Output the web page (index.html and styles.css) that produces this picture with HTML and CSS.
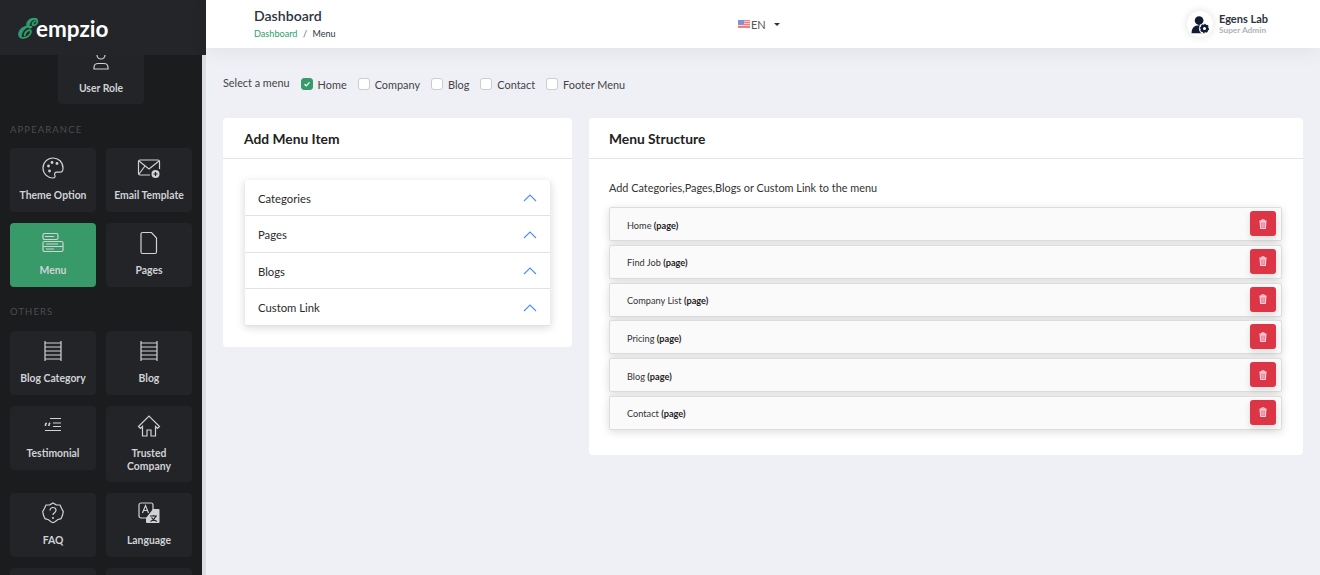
FILE: index.html
```html
<!DOCTYPE html>
<html lang="en">
<head>
<meta charset="utf-8">
<title>Menu - Dashboard</title>
<link rel="stylesheet" href="styles.css">
</head>
<body>
<div class="sidebar">
  <div class="logo"><span class="logo-mark">&#x2130;</span><span class="logo-word">empzio</span></div>
  <div class="side-scroll">
    <div class="side-inner">
      <div class="tile-row tile-row-center">
        <a class="tile">
          <svg class="ico" viewBox="0 0 24 24"><circle cx="12" cy="7" r="4"/><path d="M5 21v-1.500c0-2.500 2-4 4-4h6c2 0 4 1.500 4 4V21z"/></svg>
          <span>User Role</span>
        </a>
      </div>
      <div class="side-label label-appearance">APPEARANCE</div>
      <div class="tile-row">
        <a class="tile">
          <svg class="ico" viewBox="0 0 24 24"><path d="M12 2a10 10 0 1 0 0 20c2 0 2.500-1.500 1.800-2.800-.8-1.500.2-3 1.900-3H19c1.800 0 3-1.500 3-4C22 6 17.500 2 12 2z"/><circle cx="7.500" cy="10" r="1.400" class="fill"/><circle cx="11" cy="6.500" r="1.400" class="fill"/><circle cx="16" cy="7.500" r="1.400" class="fill"/><circle cx="8.500" cy="15" r="1.400" class="fill"/></svg>
          <span>Theme Option</span>
        </a>
        <a class="tile">
          <svg class="ico" viewBox="0 0 24 24"><path d="M13 19H3a1.500 1.500 0 0 1-1.500-1.500v-12A1.500 1.500 0 0 1 3 4h18a1.500 1.500 0 0 1 1.500 1.500V13"/><path d="M2 5l10 8 10-8M2 18l6-8"/><circle cx="18.500" cy="18" r="4" class="fill"/><path d="M18.500 16v4M16.500 18h4" class="cut"/></svg>
          <span>Email Template</span>
        </a>
      </div>
      <div class="tile-row">
        <a class="tile tile-active">
          <svg class="ico" viewBox="0 0 24 24"><rect x="2" y="2.500" width="15" height="6" rx="1.500"/><rect x="2" y="10.500" width="20" height="10" rx="1.500"/><path d="M2 15.500h20M5 13h12M5 18h8M4 5.500h9"/></svg>
          <span>Menu</span>
        </a>
        <a class="tile">
          <svg class="ico" viewBox="0 0 24 24"><path d="M5.500 1.500h9l5 5.500v14a1.500 1.500 0 0 1-1.500 1.500H5.500A1.500 1.500 0 0 1 4 21V3a1.500 1.500 0 0 1 1.500-1.500z"/></svg>
          <span>Pages</span>
        </a>
      </div>
      <div class="side-label label-others">OTHERS</div>
      <div class="tile-row">
        <a class="tile">
          <svg class="ico" viewBox="0 0 24 24"><path d="M4 2v20M20 2v20M4 4h16M4 8h16M4 12h16M4 16h16M4 20h16"/></svg>
          <span>Blog Category</span>
        </a>
        <a class="tile">
          <svg class="ico" viewBox="0 0 24 24"><path d="M4 2v20M20 2v20M4 4h16M4 8h16M4 12h16M4 16h16M4 20h16"/></svg>
          <span>Blog</span>
        </a>
      </div>
      <div class="tile-row tile-row-top">
        <a class="tile">
          <svg class="ico" viewBox="0 0 24 24"><path d="M9 4.500h11M12 9h8M12 12.500h8M4 16.500h16"/><path d="M4.500 12v-1c0-1 .4-1.600 1.200-2M8 12v-1c0-1 .4-1.600 1.200-2" class="thick"/></svg>
          <span>Testimonial</span>
        </a>
        <a class="tile">
          <svg class="ico" viewBox="0 0 24 24"><path d="M1.500 12.500L12 2l10.500 10.500-2 2-2-2V22H14v-6h-4v6H5.500v-9.500l-2 2z"/></svg>
          <span>Trusted Company</span>
        </a>
      </div>
      <div class="tile-row">
        <a class="tile">
          <svg class="ico" viewBox="0 0 24 24"><path d="M12 2l3.200 1.800 3.800.2 1.500 3.300 1.800 3.400-.8 3.600-1.500 3.400-3.500 1-2.800 2.300-1.700.5-1.700-.5-2.800-2.300-3.500-1-1.500-3.400-.8-3.600 1.800-3.400L5 4l3.800-.2z"/><path d="M9 9.500c0-1.700 1.300-3 3-3s3 1.200 3 2.800c0 2.400-3 2.400-3 4.700"/><circle cx="12" cy="17" r="1" class="fill"/></svg>
          <span>FAQ</span>
        </a>
        <a class="tile">
          <svg class="ico" viewBox="0 0 24 24"><rect x="2" y="2" width="14" height="15" rx="2"/><path d="M5.500 12l3-7.500 3 7.500M6.700 9.500h3.600"/><path d="M16 8h5.500a1 1 0 0 1 1 1v12a1 1 0 0 1-1 1H10a1 1 0 0 1-1-1v-4z" class="fill"/><path d="M13 15h7M16.500 14v1.500M19 15c-1 2.500-3 4.500-5.500 5.500M14.500 16.500c1 2 3 3.200 5.500 4" class="cut"/></svg>
          <span>Language</span>
        </a>
      </div>
      <div class="tile-row">
        <a class="tile"></a>
        <a class="tile"></a>
      </div>
    </div>
  </div>
</div>

<div class="main">
  <div class="topbar">
    <div class="page-title">
      <h1>Dashboard</h1>
      <div class="crumbs"><a>Dashboard</a><i>/</i><span>Menu</span></div>
    </div>
    <div class="lang">
      <svg class="flag" viewBox="0 0 12 8"><rect width="12" height="8" fill="#ef7f86"/><path d="M0 1.500h12M0 3.500h12M0 5.500h12" stroke="#f8dfe0" stroke-width=".8"/><rect width="6" height="4.500" fill="#7a94dc"/></svg>
      <span>EN</span>
      <b class="caret"></b>
    </div>
    <div class="user">
      <div class="avatar">
        <svg viewBox="0 0 24 24"><circle cx="11.500" cy="7" r="5.500"/><path d="M2 23c0-6.500 3-10 9.500-10s9.500 3.500 9.500 10z"/><circle cx="18.300" cy="17" r="7" fill="#fff"/><circle cx="18.300" cy="17" r="3.500" fill="none" stroke="#101c33" stroke-width="3"/><circle cx="18.300" cy="17" r="5.300" fill="none" stroke="#101c33" stroke-width="1.300" stroke-dasharray="2 2"/></svg>
      </div>
      <div class="user-text">
        <strong>Egens Lab</strong>
        <small>Super Admin</small>
      </div>
    </div>
  </div>

  <div class="content">
    <div class="menu-select">
      <span class="select-label">Select a menu</span>
      <label class="check check-on"><b><svg viewBox="0 0 12 12"><path d="M3 6.200l2.100 2L9 4"/></svg></b>Home</label>
      <label class="check"><b></b>Company</label>
      <label class="check"><b></b>Blog</label>
      <label class="check"><b></b>Contact</label>
      <label class="check"><b></b>Footer Menu</label>
    </div>

    <div class="columns">
      <div class="card">
        <div class="card-head">Add Menu Item</div>
        <div class="card-body card-body-add">
          <div class="accordion">
            <div class="acc-row">Categories<svg viewBox="0 0 14 8"><path d="M1 7l6-6 6 6"/></svg></div>
            <div class="acc-row">Pages<svg viewBox="0 0 14 8"><path d="M1 7l6-6 6 6"/></svg></div>
            <div class="acc-row">Blogs<svg viewBox="0 0 14 8"><path d="M1 7l6-6 6 6"/></svg></div>
            <div class="acc-row">Custom Link<svg viewBox="0 0 14 8"><path d="M1 7l6-6 6 6"/></svg></div>
          </div>
        </div>
      </div>

      <div class="card">
        <div class="card-head card-head-menu">Menu Structure</div>
        <div class="card-body card-body-menu">
          <p class="hint">Add Categories,Pages,Blogs or Custom Link to the menu</p>
          <div class="menu-row"><span>Home <b>(page)</b></span><button class="del"><svg viewBox="0 0 12 12"><path class="lid" d="M1.500 2.500h9M4.500 2.500V1h3v1.500"/><path class="can" d="M2.500 3.500h7l-.6 8H3.100z"/><path class="bars" d="M5 5v5M7 5v5"/></svg></button></div>
          <div class="menu-row"><span>Find Job <b>(page)</b></span><button class="del"><svg viewBox="0 0 12 12"><path class="lid" d="M1.500 2.500h9M4.500 2.500V1h3v1.500"/><path class="can" d="M2.500 3.500h7l-.6 8H3.100z"/><path class="bars" d="M5 5v5M7 5v5"/></svg></button></div>
          <div class="menu-row"><span>Company List <b>(page)</b></span><button class="del"><svg viewBox="0 0 12 12"><path class="lid" d="M1.500 2.500h9M4.500 2.500V1h3v1.500"/><path class="can" d="M2.500 3.500h7l-.6 8H3.100z"/><path class="bars" d="M5 5v5M7 5v5"/></svg></button></div>
          <div class="menu-row"><span>Pricing <b>(page)</b></span><button class="del"><svg viewBox="0 0 12 12"><path class="lid" d="M1.500 2.500h9M4.500 2.500V1h3v1.500"/><path class="can" d="M2.500 3.500h7l-.6 8H3.100z"/><path class="bars" d="M5 5v5M7 5v5"/></svg></button></div>
          <div class="menu-row"><span>Blog <b>(page)</b></span><button class="del"><svg viewBox="0 0 12 12"><path class="lid" d="M1.500 2.500h9M4.500 2.500V1h3v1.500"/><path class="can" d="M2.500 3.500h7l-.6 8H3.100z"/><path class="bars" d="M5 5v5M7 5v5"/></svg></button></div>
          <div class="menu-row"><span>Contact <b>(page)</b></span><button class="del"><svg viewBox="0 0 12 12"><path class="lid" d="M1.500 2.500h9M4.500 2.500V1h3v1.500"/><path class="can" d="M2.500 3.500h7l-.6 8H3.100z"/><path class="bars" d="M5 5v5M7 5v5"/></svg></button></div>
        </div>
      </div>
    </div>
  </div>
</div>
</body>
</html>
```

FILE: styles.css
```css
/* Admin menu page */

html, body
{ margin: 0;
height: 100%;
overflow: hidden;
}

body
{ display: flex;
font-family: Lato, "Liberation Sans", sans-serif;
background-color: #eff0f6;
color: #2d3340;
}

/* Sidebar */

.sidebar
{ width: 206px;
height: 575px;
flex: none;
display: flex;
flex-direction: column;
background-color: #dcdde0;
}

.logo
{ height: 55px;
flex: none;
box-sizing: border-box;
padding: 2px 0 0 17px;
display: flex;
align-items: center;
background-color: #232528;
}

.logo-mark
{ font-family: "DejaVu Serif", "Liberation Serif", serif;
font-style: italic;
font-size: 27px;
line-height: 30px;
color: #2f9e6e;
-webkit-text-stroke: 1.100px #2f9e6e;
width: 19px;
}

.logo-word
{ font-size: 22.500px;
font-weight: 700;
color: #fff;
}

.side-scroll
{ flex: 1;
width: 202px;
overflow: hidden;
background-color: #1a1c1e;
}

.side-inner
{ margin-top: -15px;
padding: 0 10px;
}

.tile-row
{ display: flex;
gap: 10px;
margin-bottom: 11px;
align-items: flex-start;
}

.tile-row-center
{ justify-content: center;
}

.tile
{ width: 86px;
min-height: 64px;
box-sizing: border-box;
padding: 10px 4px 9px;
display: flex;
flex-direction: column;
align-items: center;
background-color: #222427;
border-radius: 4px;
color: #d0d2d6;
font-size: 10.400px;
font-weight: 700;
line-height: 13px;
text-align: center;
}

.tile span
{ margin-top: 9px;
}

.tile-row-center .tile span
{ margin-top: 10px;
}

.tile-active
{ background-color: #379a68;
}

.ico
{ width: 24px;
height: 24px;
margin: -2px 0 0;
flex: none;
fill: none;
stroke: currentColor;
stroke-width: 1.200;
}

.ico .fill
{ fill: currentColor;
stroke: none;
}

.ico .cut
{ stroke: #222427;
}

.ico .thick
{ stroke-width: 1.600;
}

.side-label
{ font-size: 9.500px;
line-height: 12px;
letter-spacing: 1.100px;
color: #4b4d50;
}

.label-appearance
{ margin: 20px 0 12px;
}

.label-others
{ margin: 19px 0 13px;
}

/* Top bar */

.main
{ flex: 1;
min-width: 0;
display: flex;
flex-direction: column;
}

.topbar
{ height: 48px;
flex: none;
box-sizing: border-box;
padding: 0 52px 0 48px;
display: flex;
align-items: center;
justify-content: space-between;
background-color: #fff;
box-shadow: 0 4px 20px rgba(0, 0, 0, .06);
}

.page-title
{ padding-bottom: 2px;
}

.page-title h1
{ margin: 0;
font-size: 14.100px;
line-height: 18px;
font-weight: 600;
}

.crumbs
{ margin-top: 3px;
font-size: 9.150px;
line-height: 12px;
}

.crumbs a
{ color: #2f9e6e;
}

.crumbs i
{ margin: 0 5.500px;
font-style: normal;
color: #666;
}

.crumbs span
{ font-size: 9px;
}

.lang
{ display: flex;
align-items: center;
font-size: 11px;
color: #555;
margin-right: 5px;
}

.flag
{ width: 12px;
height: 8px;
margin-right: 1px;
}

.caret
{ margin-left: 8px;
border: 3px solid transparent;
border-top-color: #333;
border-bottom: 0;
}

.user
{ display: flex;
align-items: center;
gap: 6px;
}

.avatar
{ width: 26px;
height: 26px;
border-radius: 50%;
display: flex;
align-items: center;
justify-content: center;
background-color: #fff;
box-shadow: 0 0 8px rgba(0, 0, 0, .12);
}

.avatar svg
{ width: 19px;
height: 19px;
fill: #101c33;
}

.user-text strong
{ display: block;
font-size: 11px;
line-height: 13px;
}

.user-text small
{ display: block;
font-size: 8.300px;
line-height: 11px;
font-weight: 700;
color: #b0b2b8;
}

/* Content */

.content
{ padding: 26px 17px 0;
}

.menu-select
{ display: flex;
align-items: center;
height: 20px;
font-size: 10.900px;
color: #444;
}

.select-label
{ margin: -4px 11px 0 0;
font-size: 10.850px;
}

.check
{ display: flex;
align-items: center;
margin-right: 11px;
}

.check b
{ width: 10px;
height: 10px;
margin-right: 5px;
border: 1px solid #ccc;
border-radius: 3px;
background-color: #fff;
display: block;
}

.check-on b
{ background-color: #379a68;
border-color: #379a68;
}

.check svg
{ display: block;
fill: none;
stroke: #fff;
stroke-width: 1.600;
}

.columns
{ margin-top: 24px;
display: grid;
grid-template-columns: 348.500px 1fr;
gap: 17px;
align-items: start;
}

.card
{ background-color: #fff;
border-radius: 4px;
}

.card-head
{ height: 41px;
box-sizing: border-box;
padding: 0 21px;
border-bottom: 1px solid #e5e5e5;
font-size: 13.800px;
font-weight: 700;
line-height: 42px;
color: #222;
}

.card-head-menu
{ padding-left: 20.500px;
}

.card-body-add
{ padding: 21px 20.500px 21px 21px;
}

.accordion
{ border: 1px solid #ececec;
border-width: 0 1px;
border-radius: 3px;
box-shadow: 0 2px 8px rgba(0, 0, 0, .14);
}

.acc-row
{ height: 36.400px;
box-sizing: border-box;
padding: 1.500px 13px 0;
display: flex;
align-items: center;
justify-content: space-between;
border-bottom: 1px solid #e2e2e2;
font-size: 11.300px;
color: #2b2b2b;
}

.acc-row svg
{ width: 14px;
height: 8px;
fill: none;
stroke: #4d8df5;
stroke-width: 1.100;
}

.card-body-menu
{ padding: 21px 21px 21.200px 20.500px;
}

.hint
{ margin: 0 0 12px;
font-size: 10.900px;
line-height: 15px;
color: #333;
}

.menu-row
{ height: 34px;
margin-bottom: 3.800px;
padding: 0 5px 0 17px;
display: flex;
align-items: center;
justify-content: space-between;
background-color: #fafafa;
border: 1px solid #ddd;
border-radius: 2px;
box-shadow: 0 2px 8px rgba(0, 0, 0, .14);
box-sizing: border-box;
font-size: 9.200px;
color: #333;
}

.menu-row span
{ padding-top: 2px;
}

.menu-row b
{ color: #222;
}

.del
{ width: 26px;
height: 25px;
padding: 0;
border: 0;
border-radius: 3px;
background-color: #dc3545;
box-shadow: 0 3px 6px rgba(0, 0, 0, .12);
align-self: flex-start;
margin-top: 3px;
display: flex;
align-items: center;
justify-content: center;
}

.del svg
{ width: 10px;
height: 10px;
fill: none;
stroke: #fff;
stroke-width: 1;
}

.del .can
{ fill: #f07a9a;
}

.del .bars
{ stroke: #f7b8c8;
}
```
